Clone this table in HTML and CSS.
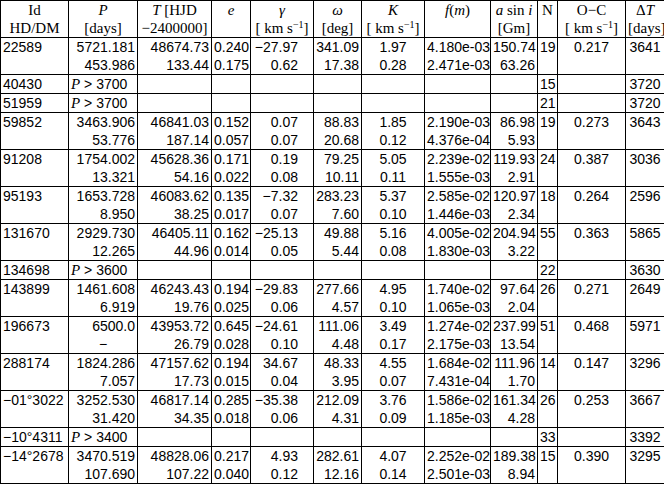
FILE: index.html
```html
<!DOCTYPE html>
<html>
<head>
<meta charset="utf-8">
<link rel="stylesheet" href="styles.css">
</head>
<body>
<table class="t">
<colgroup>
<col class="c1"><col class="c2"><col class="c3"><col class="c4"><col class="c5"><col class="c6"><col class="c7"><col class="c8"><col class="c9"><col class="c10"><col class="c11"><col class="c12">
</colgroup>
<thead>
<tr><th>Id</th><th><i>P</i></th><th><i>T</i> [HJD</th><th><i>e</i></th><th><i>γ</i></th><th><i>ω</i></th><th><i>K</i></th><th><i>f</i>(<i>m</i>)</th><th><i>a</i> sin <i>i</i></th><th>N</th><th>O−C</th><th>Δ<i>T</i></th></tr>
<tr><th>HD/DM</th><th>[days]</th><th>−2400000]</th><th></th><th>[ km s<sup>−1</sup>]</th><th>[deg]</th><th>[ km s<sup>−1</sup>]</th><th></th><th>[Gm]</th><th></th><th>[ km s<sup>−1</sup>]</th><th>[days]</th></tr>
</thead>
<tbody>
<tr><td>22589</td><td>5721.181</td><td>48674.73</td><td>0.240</td><td>−27.97</td><td>341.09</td><td>1.97</td><td>4.180e-03</td><td>150.74</td><td>19</td><td>0.217</td><td>3641</td></tr>
<tr><td></td><td>453.986</td><td>133.44</td><td>0.175</td><td>0.62</td><td>17.38</td><td>0.28</td><td>2.471e-03</td><td>63.26</td><td></td><td></td><td></td></tr>
</tbody>
<tbody>
<tr><td>40430</td><td class="lim"><i>P</i> &gt; 3700</td><td></td><td></td><td></td><td></td><td></td><td></td><td></td><td>15</td><td></td><td>3720</td></tr>
</tbody>
<tbody>
<tr><td>51959</td><td class="lim"><i>P</i> &gt; 3700</td><td></td><td></td><td></td><td></td><td></td><td></td><td></td><td>21</td><td></td><td>3720</td></tr>
</tbody>
<tbody>
<tr><td>59852</td><td>3463.906</td><td>46841.03</td><td>0.152</td><td>0.07</td><td>88.83</td><td>1.85</td><td>2.190e-03</td><td>86.98</td><td>19</td><td>0.273</td><td>3643</td></tr>
<tr><td></td><td>53.776</td><td>187.14</td><td>0.057</td><td>0.07</td><td>20.68</td><td>0.12</td><td>4.376e-04</td><td>5.93</td><td></td><td></td><td></td></tr>
</tbody>
<tbody>
<tr><td>91208</td><td>1754.002</td><td>45628.36</td><td>0.171</td><td>0.19</td><td>79.25</td><td>5.05</td><td>2.239e-02</td><td>119.93</td><td>24</td><td>0.387</td><td>3036</td></tr>
<tr><td></td><td>13.321</td><td>54.16</td><td>0.022</td><td>0.08</td><td>10.11</td><td>0.11</td><td>1.555e-03</td><td>2.91</td><td></td><td></td><td></td></tr>
</tbody>
<tbody>
<tr><td>95193</td><td>1653.728</td><td>46083.62</td><td>0.135</td><td>−7.32</td><td>283.23</td><td>5.37</td><td>2.585e-02</td><td>120.97</td><td>18</td><td>0.264</td><td>2596</td></tr>
<tr><td></td><td>8.950</td><td>38.25</td><td>0.017</td><td>0.07</td><td>7.60</td><td>0.10</td><td>1.446e-03</td><td>2.34</td><td></td><td></td><td></td></tr>
</tbody>
<tbody>
<tr><td>131670</td><td>2929.730</td><td>46405.11</td><td>0.162</td><td>−25.13</td><td>49.88</td><td>5.16</td><td>4.005e-02</td><td>204.94</td><td>55</td><td>0.363</td><td>5865</td></tr>
<tr><td></td><td>12.265</td><td>44.96</td><td>0.014</td><td>0.05</td><td>5.44</td><td>0.08</td><td>1.830e-03</td><td>3.22</td><td></td><td></td><td></td></tr>
</tbody>
<tbody>
<tr><td>134698</td><td class="lim"><i>P</i> &gt; 3600</td><td></td><td></td><td></td><td></td><td></td><td></td><td></td><td>22</td><td></td><td>3630</td></tr>
</tbody>
<tbody>
<tr><td>143899</td><td>1461.608</td><td>46243.43</td><td>0.194</td><td>−29.83</td><td>277.66</td><td>4.95</td><td>1.740e-02</td><td>97.64</td><td>26</td><td>0.271</td><td>2649</td></tr>
<tr><td></td><td>6.919</td><td>19.76</td><td>0.025</td><td>0.06</td><td>4.57</td><td>0.10</td><td>1.065e-03</td><td>2.04</td><td></td><td></td><td></td></tr>
</tbody>
<tbody>
<tr><td>196673</td><td>6500.0</td><td>43953.72</td><td>0.645</td><td>−24.61</td><td>111.06</td><td>3.49</td><td>1.274e-02</td><td>237.99</td><td>51</td><td>0.468</td><td>5971</td></tr>
<tr><td></td><td class="dash">−</td><td>26.79</td><td>0.028</td><td>0.10</td><td>4.48</td><td>0.17</td><td>2.175e-03</td><td>13.54</td><td></td><td></td><td></td></tr>
</tbody>
<tbody>
<tr><td>288174</td><td>1824.286</td><td>47157.62</td><td>0.194</td><td>34.67</td><td>48.33</td><td>4.55</td><td>1.684e-02</td><td>111.96</td><td>14</td><td>0.147</td><td>3296</td></tr>
<tr><td></td><td>7.057</td><td>17.73</td><td>0.015</td><td>0.04</td><td>3.95</td><td>0.07</td><td>7.431e-04</td><td>1.70</td><td></td><td></td><td></td></tr>
</tbody>
<tbody>
<tr><td>−01°3022</td><td>3252.530</td><td>46817.14</td><td>0.285</td><td>−35.38</td><td>212.09</td><td>3.76</td><td>1.586e-02</td><td>161.34</td><td>26</td><td>0.253</td><td>3667</td></tr>
<tr><td></td><td>31.420</td><td>34.35</td><td>0.018</td><td>0.06</td><td>4.31</td><td>0.09</td><td>1.185e-03</td><td>4.28</td><td></td><td></td><td></td></tr>
</tbody>
<tbody>
<tr><td>−10°4311</td><td class="lim"><i>P</i> &gt; 3400</td><td></td><td></td><td></td><td></td><td></td><td></td><td></td><td>33</td><td></td><td>3392</td></tr>
</tbody>
<tbody>
<tr><td>−14°2678</td><td>3470.519</td><td>48828.06</td><td>0.217</td><td>4.93</td><td>282.61</td><td>4.07</td><td>2.252e-02</td><td>189.38</td><td>15</td><td>0.390</td><td>3295</td></tr>
<tr><td></td><td>107.690</td><td>107.22</td><td>0.040</td><td>0.12</td><td>12.16</td><td>0.14</td><td>2.501e-03</td><td>8.94</td><td></td><td></td><td></td></tr>
</tbody>
</table>
</body>
</html>
```
FILE: styles.css
```css
body {
  margin: 0;
  background: #fff;
}
.t {
  border-collapse: collapse;
  table-layout: fixed;
  width: 664px;
  font-family: "Liberation Sans", Arial, sans-serif;
  font-size: 14px;
  color: #000;
}
.c1 { width: 68px; }
.c2 { width: 69px; }
.c3 { width: 74px; }
.c4 { width: 39px; }
.c5 { width: 63px; }
.c6 { width: 48px; }
.c7 { width: 63px; }
.c8 { width: 66px; }
.c9 { width: 47px; }
.c10 { width: 20px; }
.c11 { width: 68px; }
.c12 { width: 39px; }
.t thead,
.t tbody {
  border: 1px solid #000;
}
.t th,
.t td {
  border-left: 1px solid #000;
  border-right: 1px solid #000;
  padding: 0 2px;
  height: 18px;
  line-height: 18px;
  white-space: nowrap;
  overflow: hidden;
  font-weight: normal;
}
.t th {
  font-family: "Liberation Serif", "Times New Roman", serif;
  font-size: 15px;
  text-align: center;
}
.t sup {
  font-size: 10px;
  line-height: 0;
  vertical-align: 5px;
}
.t td:nth-child(1) { text-align: left; }
.t td:nth-child(2) { text-align: right; }
.t td:nth-child(3) { text-align: right; }
.t td:nth-child(4) { text-align: left; }
.t td:nth-child(5) { text-align: right; padding-right: 15px; }
.t td:nth-child(6) { text-align: right; }
.t td:nth-child(7) { text-align: center; }
.t td:nth-child(8) { text-align: left; }
.t td:nth-child(9) { text-align: right; }
.t td:nth-child(10) { text-align: left; }
.t td:nth-child(11) { text-align: center; }
.t td:nth-child(12) { text-align: center; }
.t td.lim { text-align: left; }
.t td.dash { text-align: center; }
.t i {
  font-family: "Liberation Serif", "Times New Roman", serif;
  font-size: 15px;
}
```
